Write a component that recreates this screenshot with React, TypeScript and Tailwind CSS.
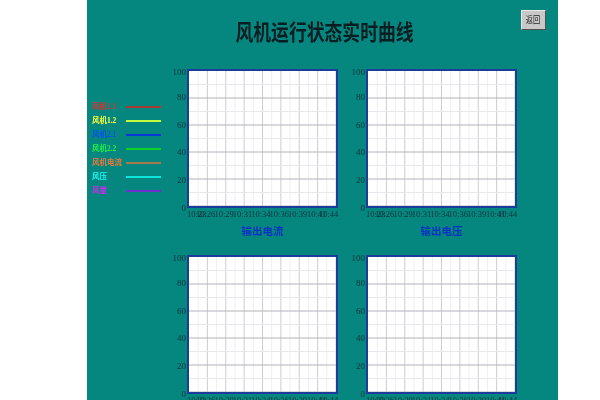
const legend = [
  { name: "风机1.1", text: "text-[#e0302c]", line: "bg-[#a83a34]" },
  { name: "风机1.2", text: "text-[#ffff3c]", line: "bg-[#c4fa3c]" },
  { name: "风机2.1", text: "text-[#0a50f0]", line: "bg-[#0838d8]" },
  { name: "风机2.2", text: "text-[#20f048]", line: "bg-[#10d028]" },
  { name: "风机电流", text: "text-[#f07838]", line: "bg-[#a87848]" },
  { name: "风压", text: "text-[#20f8f8]", line: "bg-[#10e4e0]" },
  { name: "风量", text: "text-[#d028f0]", line: "bg-[#7030d0]" },
];

const yLabels = ["100", "80", "60", "40", "20", "0"];
const xLabels = [
  { label: "10:23", width: "w-[9px]" },
  { label: "10:26", width: "w-[18.4px]" },
  { label: "10:29", width: "w-[18.4px]" },
  { label: "10:31", width: "w-[18.4px]" },
  { label: "10:34", width: "w-[18.4px]" },
  { label: "10:36", width: "w-[18.4px]" },
  { label: "10:39", width: "w-[19px]" },
  { label: "10:41", width: "w-[12px]" },
  { label: "10:44", width: "w-[18px]" },
];

function Plot() {
  const w = 147;
  const h = 135;
  return (
    <svg width={w} height={h} className="block">
      <rect width={w} height={h} fill="#ffffff" />
      {Array.from({ length: 16 }).map((_, i) => {
        const x = ((i + 1) * w) / 16;
        return (
          <line key={i} x1={x} x2={x} y1={0} y2={h} stroke={i % 2 ? "#ccccd2" : "#eeeff2"} strokeWidth={1} />
        );
      })}
      {Array.from({ length: 10 }).map((_, i) => {
        const y = ((i + 1) * h) / 10;
        return (
          <line key={i} x1={0} x2={w} y1={y} y2={y} stroke={i % 2 ? "#b4b4bc" : "#e8e8ec"} strokeWidth={1} />
        );
      })}
    </svg>
  );
}

function Chart({ title }: { title: string }) {
  return (
    <div className="flex flex-col h-[186px]">
      <div className="flex">
        <div className="w-[20px] h-[151px] -my-[6px] pr-[1px] flex flex-col justify-between text-right text-[9px] leading-[12px] text-[#0e343c]">
          {yLabels.map((label) => (
            <span key={label} className={label === "100" ? "translate-y-[3px]" : ""}>
              {label}
            </span>
          ))}
        </div>
        <div className="border-2 border-[#1c3c9c] w-[151px] h-[139px]">
          <Plot />
        </div>
      </div>
      <div className="ml-[20px] w-[151px] h-[13px] flex text-[8.5px] leading-[13px] text-[#0e343c] whitespace-nowrap">
        {xLabels.map((item) => (
          <span key={item.label} className={item.width}>
            {item.label}
          </span>
        ))}
      </div>
      <div className="ml-[20px] w-[151px] mt-[3px] text-center text-[10.5px] leading-[16px] font-bold text-[#0834c0]">
        {title}
      </div>
    </div>
  );
}

export default function App() {
  return (
    <div className="h-[400px] w-[600px] overflow-hidden bg-white font-['Liberation_Serif','Noto_Sans_CJK_SC',serif]">
      <div className="ml-[87px] w-[471px] h-[400px] overflow-hidden bg-[#05877f] blur-[0.5px]">
        <div className="h-[69px] grid grid-cols-[1fr_auto_1fr]">
          <div />
          <h1 className="pt-[17px] pl-[5px] text-center text-[22px] leading-[26px] whitespace-nowrap font-['Noto_Sans_CJK_SC',sans-serif] font-bold text-[#081e22] scale-x-[0.81]">
            风机运行状态实时曲线
          </h1>
          <div className="flex justify-end items-start pt-[10px] pr-[12px]">
            <button className="w-[25px] h-[20px] bg-[#c8c8c8] border border-t-[#e8e8e8] border-l-[#e8e8e8] border-r-[#505050] border-b-[#505050] text-[9px] leading-[16px] text-[#222222]">
              <span className="inline-block scale-x-[0.8]">返回</span>
            </button>
          </div>
        </div>
        <div className="flex">
          <div className="w-[80px] pt-[31px] pl-[5px] flex flex-col">
            {legend.map((item) => (
              <div key={item.name} className="h-[14px] flex items-center">
                <span className={`w-[34px] text-[7.5px] font-bold whitespace-nowrap ${item.text}`}>{item.name}</span>
                <span className={`w-[35px] h-[2px] ${item.line}`} />
              </div>
            ))}
          </div>
          <div className="grid grid-cols-[171px_171px] gap-x-[8px]">
            <Chart title="输出电流" />
            <Chart title="输出电压" />
            <Chart title="输出电流" />
            <Chart title="输出电压" />
          </div>
        </div>
      </div>
    </div>
  );
}
